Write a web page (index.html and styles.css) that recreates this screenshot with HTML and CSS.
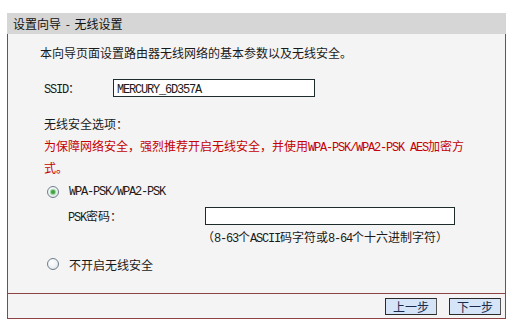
FILE: index.html
```html
<!DOCTYPE html>
<html lang="zh-CN">
<head>
<meta charset="utf-8">
<title>设置向导 - 无线设置</title>
<link rel="stylesheet" href="styles.css">
</head>
<body>
<div class="panel">
  <div class="head">设置向导 - 无线设置</div>
  <div class="content">
    <p class="intro">本向导页面设置路由器无线网络的基本参数以及无线安全。</p>
    <div class="row ssid-row">
      <span class="label"><span class="mono">SSID</span>：</span>
      <span class="field ssid-field"><span class="mono">MERCURY_6D357A</span></span>
    </div>
    <p class="title">无线安全选项：</p>
    <p class="warn">为保障网络安全，强烈推荐开启无线安全，并使用<span class="mono">WPA-PSK/WPA2-PSK AES</span>加密方<br>式。</p>
    <div class="row radio-row">
      <span class="radio checked"></span>
      <span class="mono">WPA-PSK/WPA2-PSK</span>
    </div>
    <div class="row psk-row">
      <span class="psk-label"><span class="mono">PSK</span>密码：</span>
      <span class="field psk-field"></span>
    </div>
    <p class="hint">（<span class="mono">8-63</span>个<span class="mono">ASCII</span>码字符或<span class="mono">8-64</span>个十六进制字符）</p>
    <div class="row radio-row off-row">
      <span class="radio"></span>
      <span>不开启无线安全</span>
    </div>
  </div>
  <div class="foot">
    <span class="btn">上一步</span>
    <span class="btn">下一步</span>
  </div>
</div>
</body>
</html>
```

FILE: styles.css
```css
html, body {
  margin: 0;
  padding: 0;
  background: #ffffff;
}
body {
  font-family: "Noto Sans CJK SC", "Noto Sans", sans-serif;
  font-size: 12px;
  color: #1a1a1a;
}
.panel {
  margin: 13px 0 0 7px;
  width: 499px;
}
.head {
  height: 21px;
  line-height: 21px;
  background: #d6d6d6;
  padding-left: 6px;
  color: #111;
  font-size: 12px;
  word-spacing: 2px;
}
.content {
  background: #f5f4f4;
  border-left: 1px solid #8e4444;
  border-right: 1px solid #8e4444;
  height: 259px;
  box-sizing: border-box;
  padding-top: 11px;
  display: flex;
  flex-direction: column;
  align-items: flex-start;
}
.content p {
  margin: 0;
}
.mono {
  font-family: "Liberation Mono", "DejaVu Sans Mono", monospace;
  font-size: 12px;
  letter-spacing: -1.2px;
}
.intro {
  line-height: 16px;
  padding-left: 32px;
}
.row {
  display: flex;
  align-items: center;
}
.ssid-row {
  margin-top: 18px;
  padding-left: 36px;
  height: 18px;
}
.label {
  width: 69px;
}
.field {
  display: inline-block;
  box-sizing: border-box;
  height: 18px;
  background: #ffffff;
  border: 1px solid #1e2b2b;
  line-height: 16px;
  padding-left: 3px;
}
.ssid-field {
  width: 202px;
}
.title {
  margin-top: 19px !important;
  line-height: 16px;
  padding-left: 36px;
}
.warn {
  margin-top: 4px !important;
  line-height: 20px;
  padding-left: 36px;
  color: #c40000;
}
.radio-row {
  margin-top: 6px;
  height: 16px;
  padding-left: 39px;
  gap: 4px;
}
.radio {
  width: 12px;
  height: 12px;
  box-sizing: border-box;
  border-radius: 50%;
  border: 1px solid #6f7f8c;
  background: radial-gradient(circle at 40% 35%, #ffffff 0%, #eef1f4 55%, #d3d9df 100%);
  display: flex;
  align-items: center;
  justify-content: center;
  margin-right: 6px;
}
.radio.checked::after {
  content: "";
  width: 4px;
  height: 4px;
  border-radius: 50%;
  background: #3fa33f;
  box-shadow: 0 0 1px 1px #8fd08f;
}
.psk-row {
  margin-top: 7px;
  height: 18px;
  padding-left: 60px;
}
.psk-label {
  width: 137px;
}
.psk-field {
  width: 250px;
}
.hint {
  margin-top: 4px !important;
  line-height: 16px;
  padding-left: 194px;
}
.off-row {
  margin-top: 9px;
}
.foot {
  height: 26px;
  box-sizing: border-box;
  background: #f5f4f4;
  border: 1px solid #8e4444;
  display: flex;
  justify-content: flex-end;
  align-items: flex-start;
  padding: 4px 4px 0 0;
  gap: 12px;
}
.btn {
  width: 52px;
  height: 17px;
  box-sizing: border-box;
  border: 1px solid #2a2a2a;
  border-right-color: #555;
  background: #d5e4f6;
  color: #1a2a4a;
  font-size: 12px;
  line-height: 15px;
  text-align: center;
}
```
